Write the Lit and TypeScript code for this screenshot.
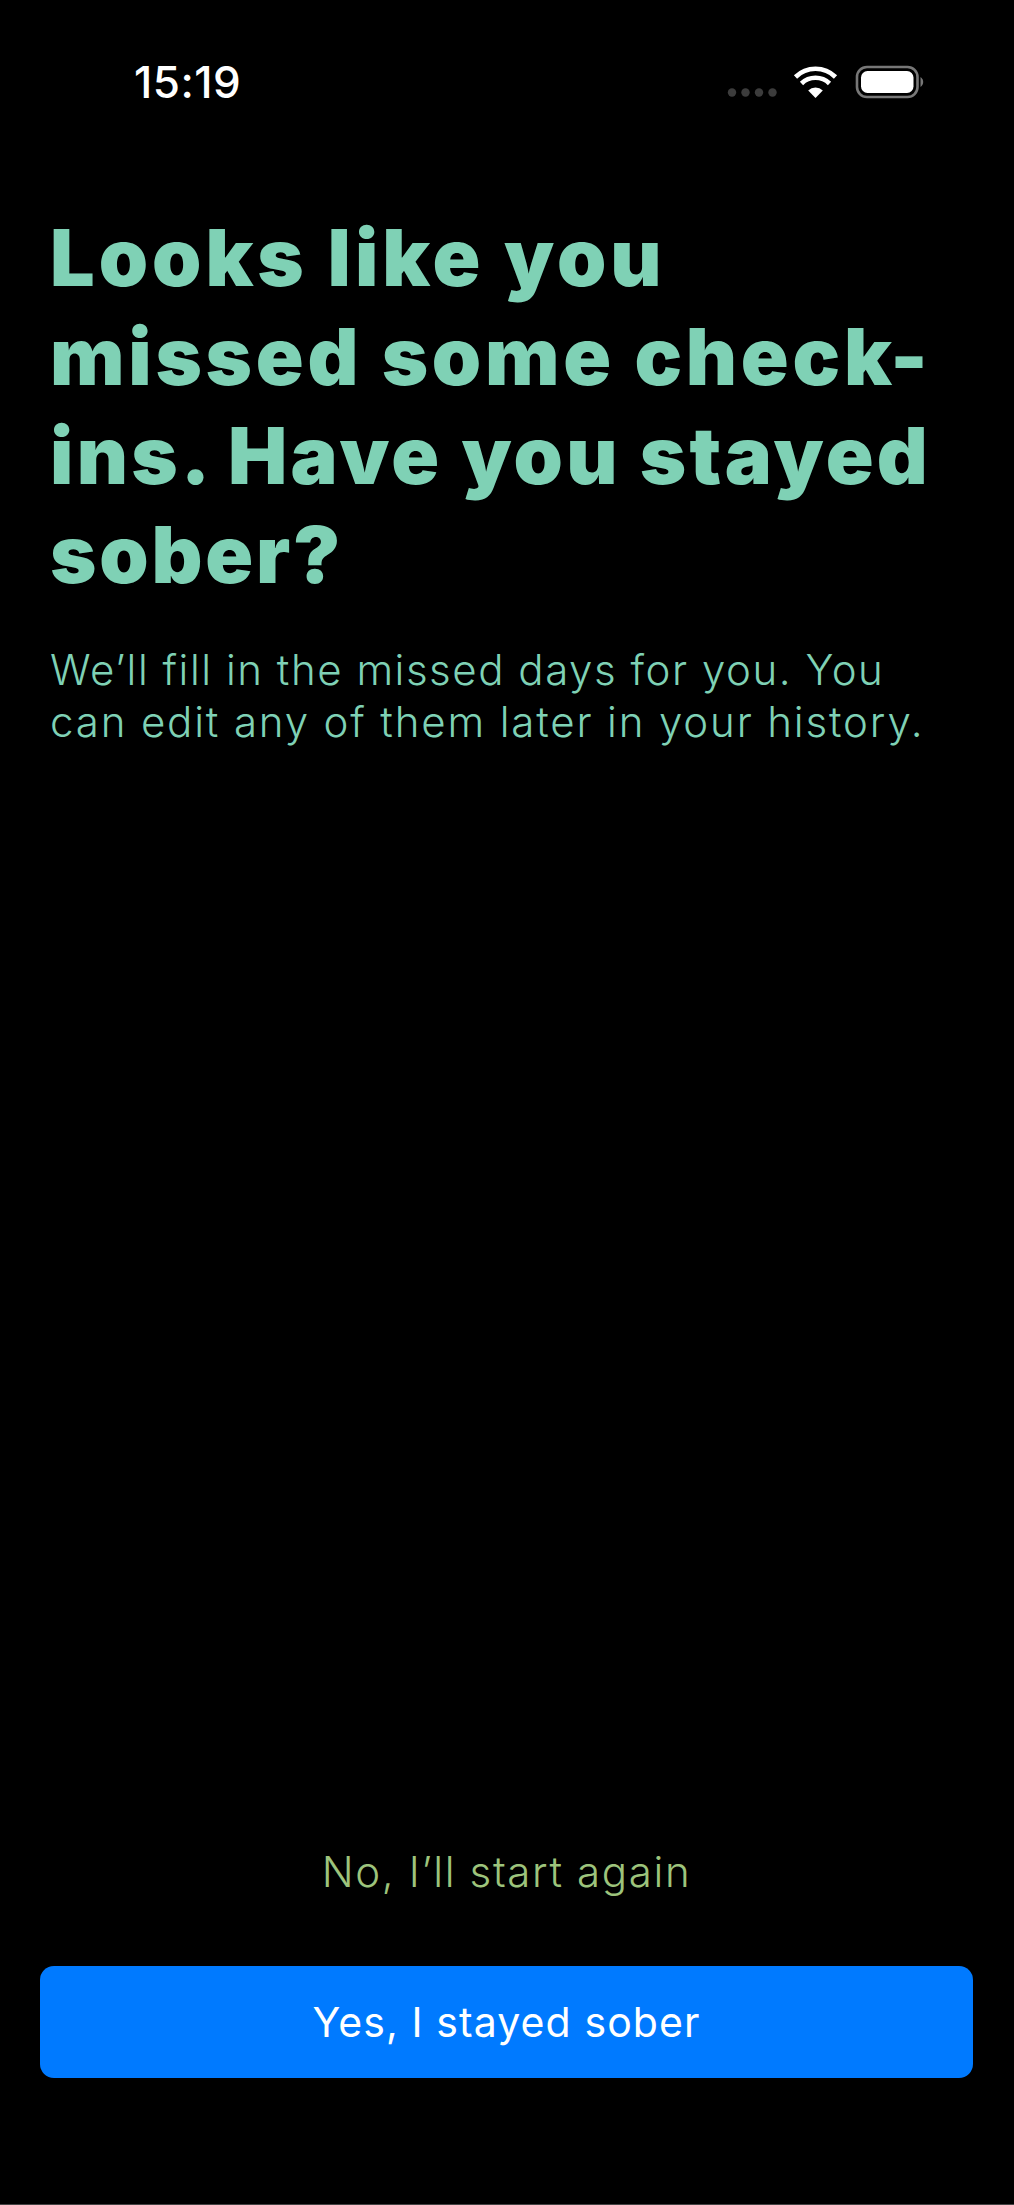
import { LitElement, html, css, svg } from "lit";
import { customElement } from "lit/decorators.js";

@customElement("app-root")
export class AppRoot extends LitElement {
  static styles = css`
    :host {
      display: block;
      width: 1014px;
      height: 2205px;
      background: #000;
      font-family: Inter, "Liberation Sans", sans-serif;
      overflow: hidden;
    }
    .page {
      height: 2205px;
      box-sizing: border-box;
      display: flex;
      flex-direction: column;
      border-bottom: 1px solid #444;
    }
    .status {
      height: 132px;
      flex: none;
      box-sizing: border-box;
      padding: 60px 89px 0 134px;
      display: flex;
      justify-content: space-between;
      align-items: flex-start;
    }
    .time {
      color: #fff;
      font-size: 44px;
      font-weight: 500;
      line-height: 44px;
      letter-spacing: 0.5px;
    }
    .status svg {
      display: block;
      margin-top: 5px;
    }
    .content {
      padding: 76px 40px 0 50px;
      flex: 1;
    }
    h1 {
      margin: 0;
      color: #7fd1b5;
      font-size: 79px;
      font-weight: 900;
      line-height: 99px;
      letter-spacing: 3.75px;
      white-space: nowrap;
    }
    h1 .wide {
      letter-spacing: 4px;
    }
    h1 .tight {
      letter-spacing: 3.25px;
    }
    h1 .short {
      letter-spacing: 2.8px;
    }
    p {
      margin: 40px 0 0;
      color: #7fd1b5;
      font-size: 42px;
      font-weight: 300;
      line-height: 52px;
      letter-spacing: 1.85px;
      white-space: nowrap;
    }
    p .tight {
      letter-spacing: 1.53px;
    }
    .line {
      display: block;
    }
    .actions {
      flex: none;
      padding: 0 41px 126px 40px;
      display: flex;
      flex-direction: column;
      align-items: center;
    }
    .secondary {
      color: #9dc47c;
      font-size: 42px;
      font-weight: 300;
      line-height: 52px;
      letter-spacing: 1.65px;
      margin-bottom: 68px;
    }
    .primary {
      width: 100%;
      height: 112px;
      border-radius: 14px;
      background: #007aff;
      color: #fff;
      font-size: 41px;
      font-weight: 400;
      letter-spacing: 1.1px;
      display: flex;
      align-items: center;
      justify-content: center;
    }
  `;

  private icons() {
    return html`<svg width="200" height="40" viewBox="0 0 200 40">
      ${svg`
        <g fill="#3c3c3c">
          <circle cx="7" cy="27.5" r="4.2"/>
          <circle cx="20.5" cy="27.5" r="4.2"/>
          <circle cx="34" cy="27.5" r="4.2"/>
          <circle cx="47.5" cy="27.5" r="4.2"/>
        </g>
        <path d="M90.5 33 L83.2 25.4 A10.5 10.5 0 0 1 97.8 25.4 Z" fill="#fff"/>
        <path d="M76.5 18.5 A20 20 0 0 1 104.5 18.5" fill="none" stroke="#fff" stroke-width="4.6"/>
        <path d="M70.5 12 A28.5 28.5 0 0 1 110.5 12" fill="none" stroke="#fff" stroke-width="4.6"/>
        <rect x="132" y="2" width="60.5" height="30" rx="10" fill="none" stroke="#777" stroke-width="2.6"/>
        <rect x="136" y="6" width="52.5" height="22" rx="6.5" fill="#fff"/>
        <path d="M195.5 12 A6 6 0 0 1 195.5 22 Z" fill="#777"/>
      `}
    </svg>`;
  }

  render() {
    return html`<div class="page">
      <div class="status">
        <div class="time">15:19</div>
        ${this.icons()}
      </div>
      <div class="content">
        <h1>
          <span class="line wide">Looks like you</span>
          <span class="line">missed some check-</span>
          <span class="line tight">ins. Have you stayed</span>
          <span class="line short">sober?</span>
        </h1>
        <p>
          <span class="line tight">We’ll fill in the missed days for you. You</span>
          <span class="line">can edit any of them later in your history.</span>
        </p>
      </div>
      <div class="actions">
        <div class="secondary">No, I’ll start again</div>
        <div class="primary">Yes, I stayed sober</div>
      </div>
    </div>`;
  }
}
